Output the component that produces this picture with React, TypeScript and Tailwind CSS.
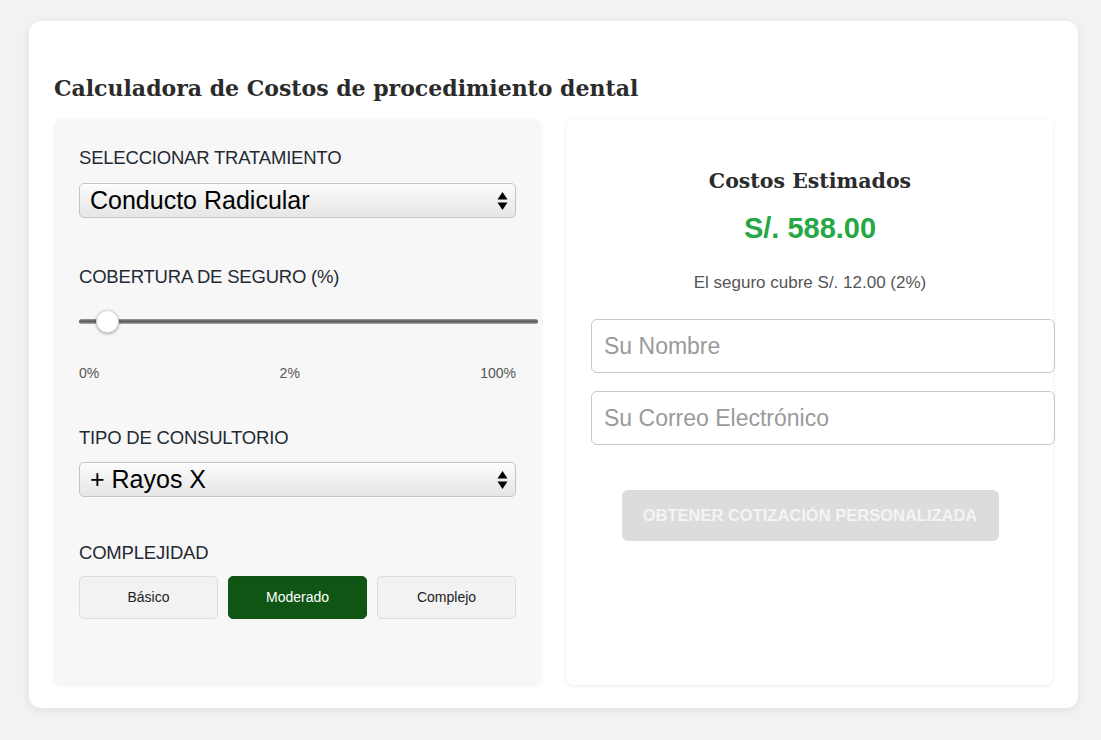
import { useState } from 'react';

const SANS = { fontFamily: '"Liberation Sans", Arial, sans-serif' };
const SERIF = { fontFamily: '"DejaVu Serif", "Liberation Serif", serif' };

function FakeSelect({ value }: { value: string }) {
  return (
    <div className="flex h-[35px] w-full items-center justify-between rounded-[5px] border border-[#c4c4c4] bg-gradient-to-b from-[#fdfdfd] via-[#f0f0f0] to-[#e6e6e6] pl-[10px] pr-[7px] shadow-[inset_0_1px_0_#fff]">
      <span className="text-[25px] leading-none text-black">{value}</span>
      <svg width="11" height="20" viewBox="0 0 11 20" className="shrink-0">
        <path d="M5.5 1 L10.5 8.5 L0.5 8.5 Z" fill="#000" />
        <path d="M5.5 19 L10.5 11.5 L0.5 11.5 Z" fill="#000" />
      </svg>
    </div>
  );
}

export default function App() {
  const [level, setLevel] = useState('Moderado');
  const coverage = 2;

  return (
    <div className="min-h-[740px] bg-[#f0f3f2] pl-[29px] pr-[23px] pt-[21px] pb-[31px]" style={SANS}>
      <div className="rounded-[12px] bg-white px-[25px] pt-[52px] pb-[23px] shadow-[0_2px_10px_rgba(0,0,0,0.08)]">
        <h1 className="mb-[16px] text-[22px] font-bold leading-[30px] text-[#2b2b2b]" style={SERIF}>
          Calculadora de Costos de procedimiento dental
        </h1>

        <div className="grid grid-cols-2 gap-[25px]">
          {/* left column */}
          <div className="h-[566px] rounded-[8px] bg-[#f7f7f7] px-[25px] pt-[29px] shadow-[0_1px_4px_rgba(0,0,0,0.06)]">
            <label className="block text-[18.5px] leading-[20px] tracking-[-0.2px] text-[#1f2a33]">SELECCIONAR TRATAMIENTO</label>
            <div className="mt-[15px]">
              <FakeSelect value="Conducto Radicular" />
            </div>

            <label className="mt-[49px] block text-[18.5px] leading-[20px] tracking-[-0.2px] text-[#1f2a33]">COBERTURA DE SEGURO (%)</label>
            <div className="relative mt-[23px] h-[24px] w-[459px]">
              <div className="absolute top-[9px] left-0 right-0 h-[5px] rounded-full bg-gradient-to-b from-[#9a9a9a] via-[#5a5a5a] to-[#b0b0b0]" />
              <div
                className="absolute top-0 h-[23px] w-[23px] rounded-full border border-[#d8d8d8] bg-white shadow-[0_1px_3px_rgba(0,0,0,0.3)]"
                style={{ left: `${17 + coverage * 0}px` }}
              />
            </div>
            <div className="mt-[31px] flex justify-between text-[14px] leading-[16px] text-[#555]">
              <span>0%</span>
              <span>{coverage}%</span>
              <span>100%</span>
            </div>

            <label className="mt-[47px] block text-[18.5px] leading-[20px] tracking-[-0.2px] text-[#1f2a33]">TIPO DE CONSULTORIO</label>
            <div className="mt-[14px]">
              <FakeSelect value="+ Rayos X" />
            </div>

            <label className="mt-[46px] block text-[18.5px] leading-[20px] tracking-[-0.2px] text-[#1f2a33]">COMPLEJIDAD</label>
            <div className="mt-[13px] grid grid-cols-3 gap-[10px]">
              {['Básico', 'Moderado', 'Complejo'].map((l) => (
                <button
                  key={l}
                  onClick={() => setLevel(l)}
                  className={
                    level === l
                      ? 'h-[43px] rounded-[5px] border border-[#0e5212] bg-[#0f5513] text-[14px] text-white'
                      : 'h-[43px] rounded-[5px] border border-[#dcdcdc] bg-[#f2f2f2] text-[14px] text-[#222]'
                  }
                >
                  {l}
                </button>
              ))}
            </div>
          </div>

          {/* right column */}
          <div className="h-[566px] rounded-[8px] bg-white pl-[25px] pt-[50px] shadow-[0_1px_5px_rgba(0,0,0,0.08)]">
            <div className="w-[438px] text-center">
              <h2 className="text-[20.5px] font-bold leading-[24px] text-[#2b2b2b]" style={SERIF}>Costos Estimados</h2>
              <div className="mt-[18px] text-[29px] font-bold leading-[34px] text-[#28a745]">S/. 588.00</div>
              <p className="mt-[28px] text-[17px] leading-[20px] text-[#555]">El seguro cubre S/. 12.00 ({coverage}%)</p>
            </div>
            <input
              placeholder="Su Nombre"
              className="mt-[26px] box-content block h-[52px] w-[438px] rounded-[6px] border border-[#c8c8c8] px-[12px] py-0 text-[23px] text-[#333] outline-none placeholder:text-[#9a9a9a]"
            />
            <input
              placeholder="Su Correo Electrónico"
              className="mt-[18px] box-content block h-[52px] w-[438px] rounded-[6px] border border-[#c8c8c8] px-[12px] py-0 text-[23px] text-[#333] outline-none placeholder:text-[#9a9a9a]"
            />
            <div className="w-[438px]">
              <button
                disabled
                className="mx-auto mt-[45px] block h-[51px] w-[377px] rounded-[6px] bg-[#dcdcdc] text-[16.5px] font-bold text-[#f4f4f4]"
              >
                OBTENER COTIZACIÓN PERSONALIZADA
              </button>
            </div>
          </div>
        </div>
      </div>
    </div>
  );
}
